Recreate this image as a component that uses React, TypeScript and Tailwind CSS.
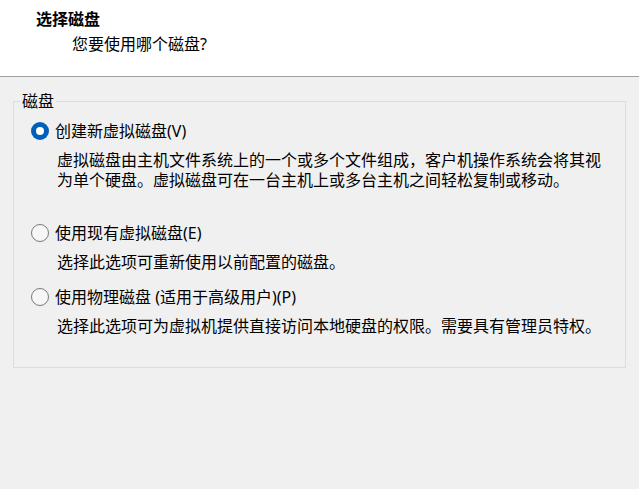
import React, { useState } from 'react'

const font = { fontFamily: '"Noto Sans", "Noto Sans CJK SC", sans-serif' }

interface OptionProps {
  label: string
  desc: string[]
  checked: boolean
  onSelect: () => void
  className?: string
}

const Option = ({ label, desc, checked, onSelect, className }: OptionProps) => (
  <div className={className}>
    <div className="flex items-center h-[20px] cursor-default" onClick={onSelect}>
      {checked ? (
        <span className="flex-none flex items-center justify-center w-[18px] h-[18px] rounded-full bg-[#005fb8]">
          <span className="w-[8px] h-[8px] rounded-full bg-white" />
        </span>
      ) : (
        <span className="flex-none w-[18px] h-[18px] rounded-full border border-[#7a7a7a] bg-[#f6f6f6]" />
      )}
      <span className="ml-[6px] whitespace-nowrap">{label}</span>
    </div>
    <div className="mt-[9px] pl-[26px]">
      {desc.map(line => (
        <div key={line} className="whitespace-nowrap">{line}</div>
      ))}
    </div>
  </div>
)

export default function App() {
  const [choice, setChoice] = useState(0)

  return (
    <div style={font} className="w-[639px] h-[489px] bg-[#f0f0f0] text-black text-[16px] leading-[20px] overflow-hidden">
      <div className="h-[77px] bg-white border-b border-[#a0a0a0] pt-[9px]">
        <div className="pl-[36px] font-bold">选择磁盘</div>
        <div className="pl-[72px] mt-[5px]">您要使用哪个磁盘?</div>
      </div>

      <fieldset className="mt-[14px] ml-[13px] w-[613px] h-[277px] border border-[#dcdcdc] pl-[6px]">
        <legend className="px-[2px]">磁盘</legend>
        <div className="pl-[11px]">
          <Option
            className="mt-[10px]"
            label="创建新虚拟磁盘(V)"
            desc={[
              '虚拟磁盘由主机文件系统上的一个或多个文件组成，客户机操作系统会将其视',
              '为单个硬盘。虚拟磁盘可在一台主机上或多台主机之间轻松复制或移动。',
            ]}
            checked={choice === 0}
            onSelect={() => setChoice(0)}
          />
          <Option
            className="mt-[33px]"
            label="使用现有虚拟磁盘(E)"
            desc={['选择此选项可重新使用以前配置的磁盘。']}
            checked={choice === 1}
            onSelect={() => setChoice(1)}
          />
          <Option
            className="mt-[15px]"
            label="使用物理磁盘 (适用于高级用户)(P)"
            desc={['选择此选项可为虚拟机提供直接访问本地硬盘的权限。需要具有管理员特权。']}
            checked={choice === 2}
            onSelect={() => setChoice(2)}
          />
        </div>
      </fieldset>
    </div>
  )
}
